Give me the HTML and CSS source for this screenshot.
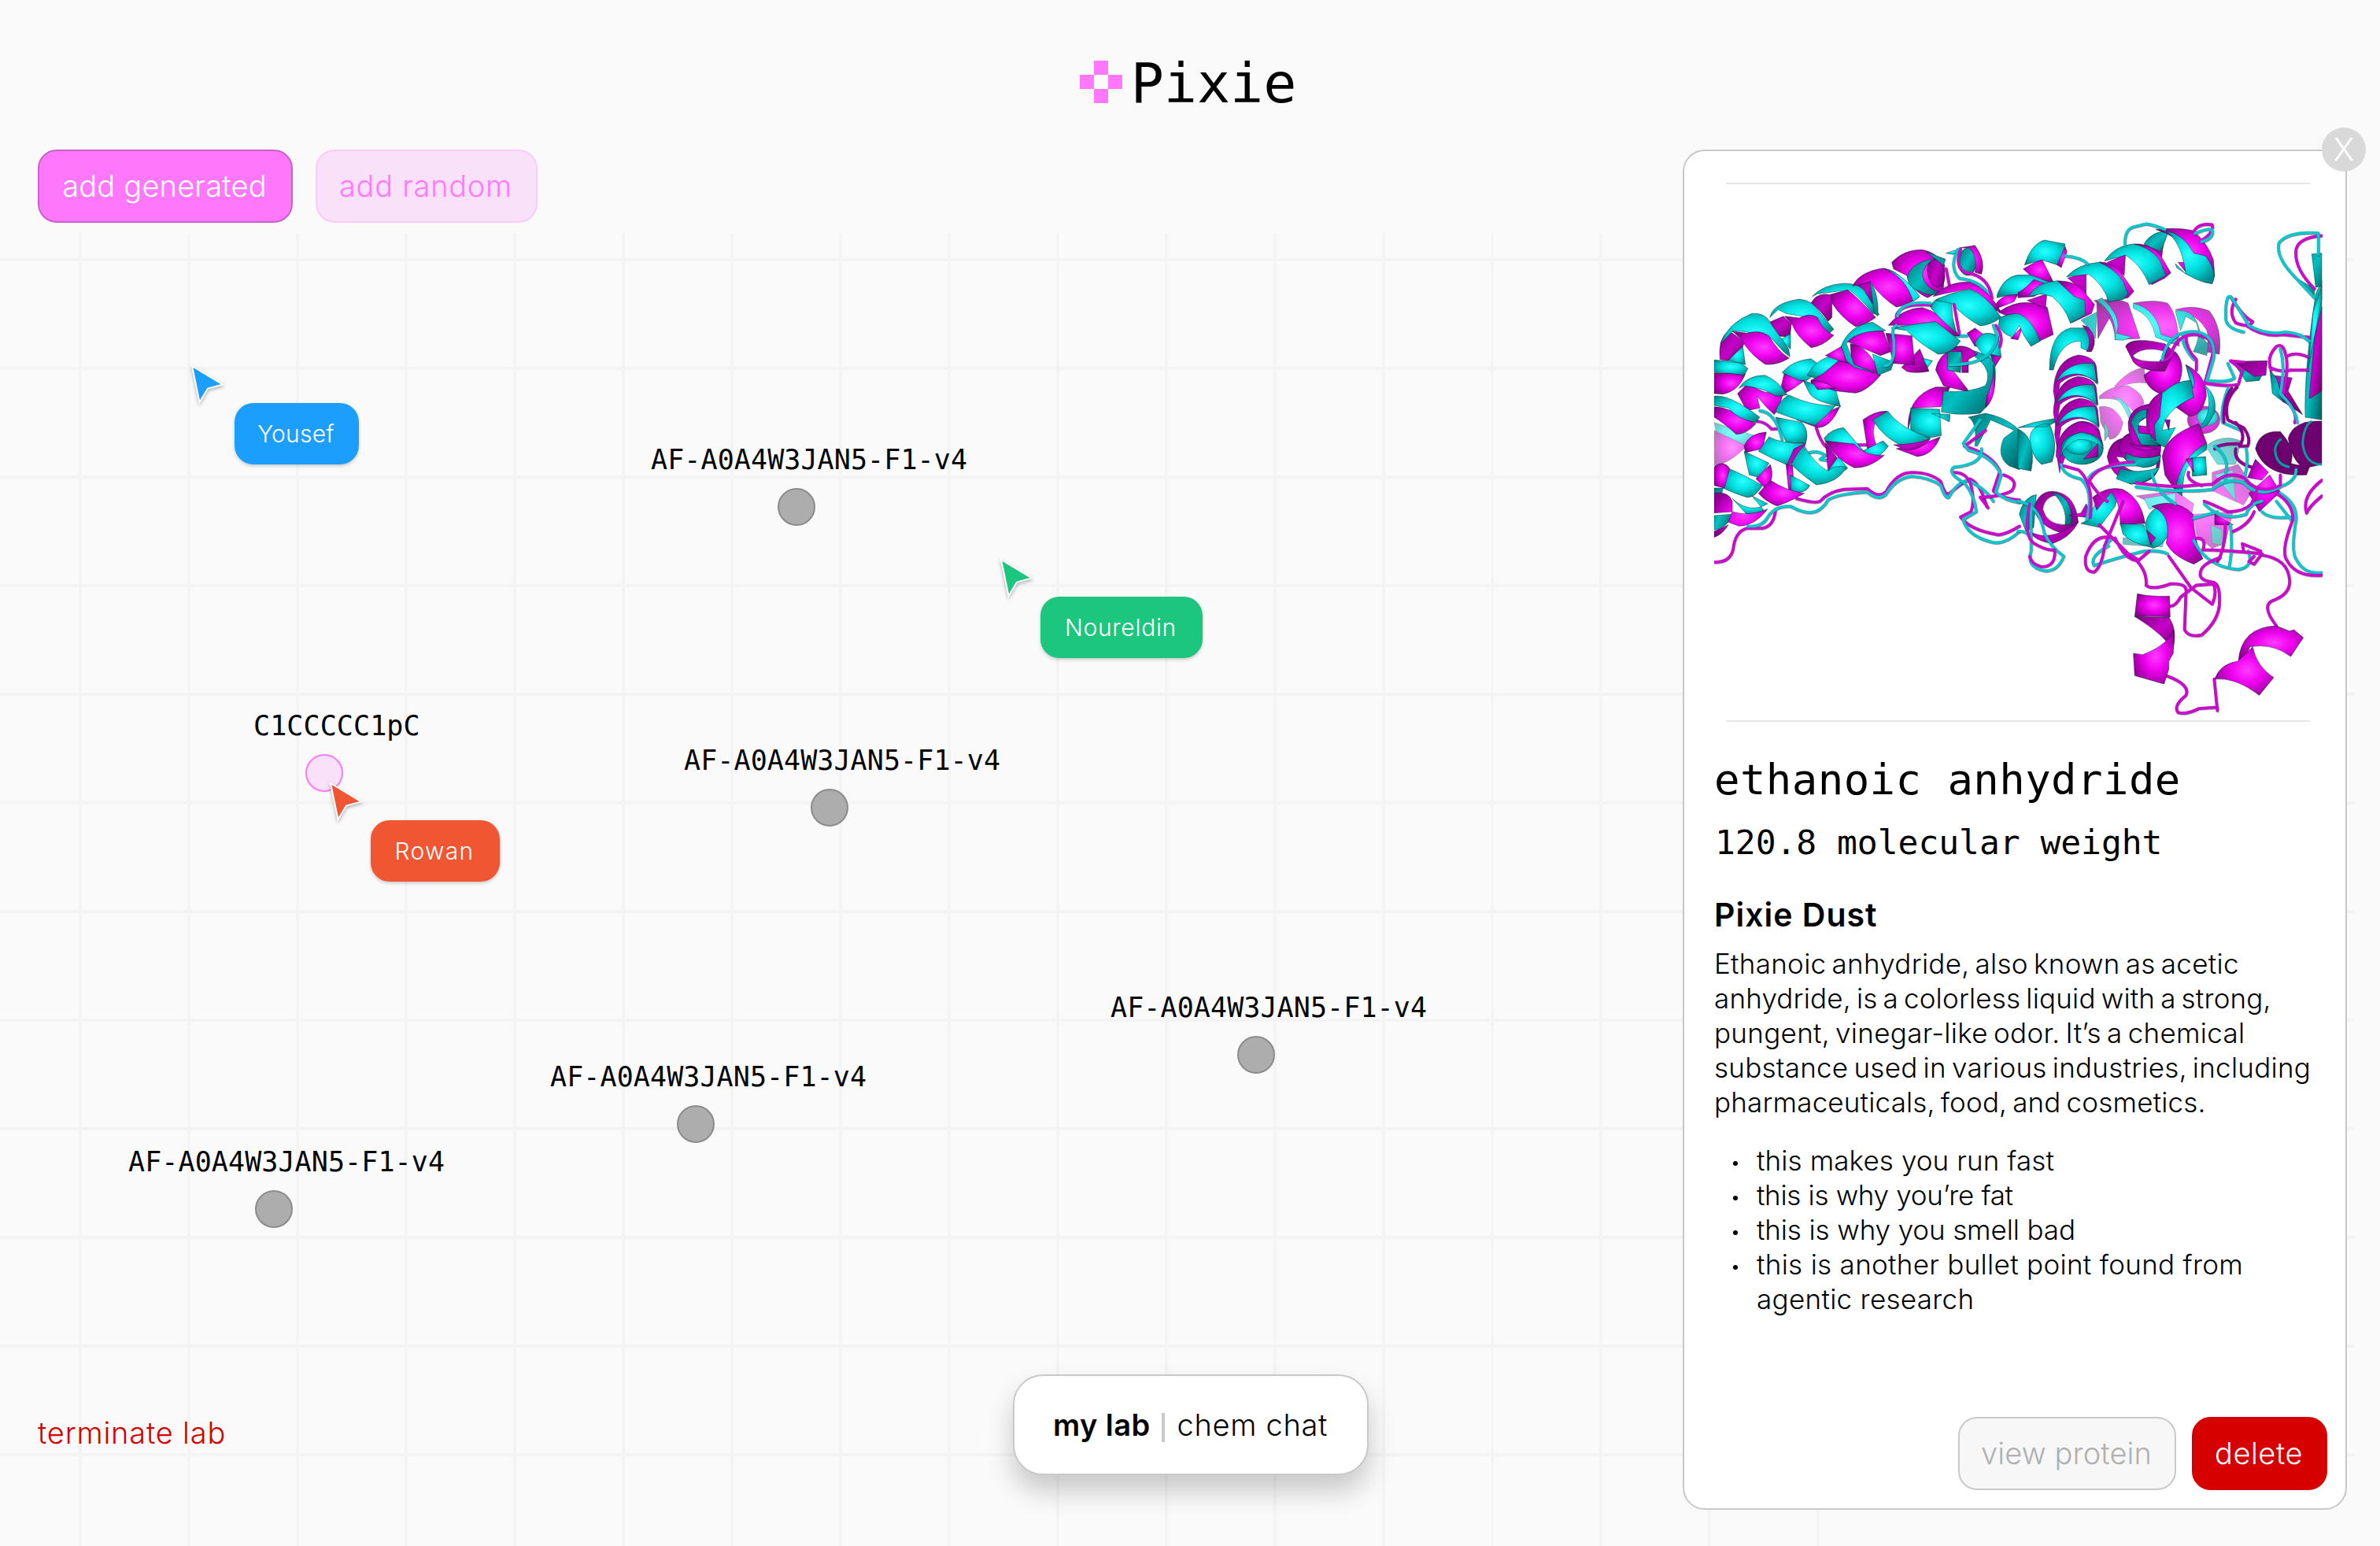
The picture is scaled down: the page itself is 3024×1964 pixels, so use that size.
FILE: index.html
```html
<!DOCTYPE html>
<html lang="en">
<head>
<meta charset="utf-8">
<title>Pixie</title>
<link rel="stylesheet" href="styles.css">
</head>
<body>
<div class="grid-lines"></div>

<header class="brand">
  <svg class="brand-mark" viewBox="0 0 3 3" shape-rendering="crispEdges"><path d="M1 0h1v1H1zM0 1h1v1H0zM2 1h1v1H2zM1 2h1v1H1z"/></svg>
  <h1 class="brand-name">Pixie</h1>
</header>

<main class="workspace">
  <div class="toolbar">
    <button class="btn btn-generated">add generated</button>
    <button class="btn btn-random">add random</button>
  </div>
  <div class="footer">
    <a class="terminate">terminate lab</a>
    <nav class="tabs">
      <span class="tab tab-active">my lab</span>
      <span class="tab-divider"></span>
      <span class="tab">chem chat</span>
    </nav>
  </div>
</main>

<aside class="panel">
  <button class="close" aria-label="close"><span>X</span></button>
  <figure class="figure">
    <svg class="protein" viewBox="2178 234 773 681">
      <defs>
        <radialGradient id="gm" cx=".55" cy=".48" r=".62"><stop offset="0" stop-color="#ff3cff"/><stop offset=".45" stop-color="#ee00ee"/><stop offset="1" stop-color="#8a008c"/></radialGradient>
        <radialGradient id="gc" cx=".5" cy=".45" r=".62"><stop offset="0" stop-color="#2dffff"/><stop offset=".45" stop-color="#00e2e2"/><stop offset="1" stop-color="#00888c"/></radialGradient>
        <linearGradient id="gmd" x1="0" y1="0" x2="1" y2="1"><stop offset="0" stop-color="#7c007e"/><stop offset=".5" stop-color="#c800ca"/><stop offset="1" stop-color="#6a006c"/></linearGradient>
        <linearGradient id="gcd" x1="0" y1="0" x2="1" y2="1"><stop offset="0" stop-color="#007476"/><stop offset=".5" stop-color="#00c0c2"/><stop offset="1" stop-color="#005e60"/></linearGradient>
      </defs>

      <!-- left half -->
      <g transform="translate(2176 270) scale(.33333)">
        <g class="tubes">
          <path class="tm" d="M6 1332Q65 1335 78 1285 85 1215 130 1203L190 1203Q235 1195 240 1130M320 1090Q390 1110 410 1100 440 1065 500 1055L590 1052Q630 1090 660 1065 700 990 760 990 830 990 870 1025 885 1075 900 1072 950 1030 980 1015 1020 1030 1045 1120M165 795Q200 795 225 825L275 822M395 820Q410 870 430 890M540 885H600M890 215L905 290"/>
          <path class="tc" d="M135 1195Q190 1200 210 1160 240 1115 300 1120 350 1150 390 1140 420 1130 440 1095 480 1070 590 1065 630 1100 660 1075 700 1010 760 1005 830 1010 870 1040 885 1090 900 1085 930 1030 970 1020 1040 1050 1070 1100M180 755Q240 760 265 865M370 915Q400 905 430 925L410 940 440 945M920 470H970"/>
        </g>
        <g class="far">
          <path class="c" d="M6 800L160 850 120 890 20 870Z"/><path class="m" d="M6 830L130 890Q60 960 6 965Z"/>
        </g>
        <!-- upper helix -->
        <path class="md" d="M28 560Q20 480 60 452 100 470 120 500L105 530 60 565Z"/><path class="c" d="M60 563L115 510 125 580Z"/>
        <path class="md" d="M212 420L270 395 300 425 295 475 245 470Z"/><path class="c" d="M260 485L297 460 297 520Z"/>
        <path class="md" d="M375 345Q400 300 455 315L455 400 440 415Q410 370 375 345Z"/>
        <path class="md" d="M530 290Q560 250 600 262 620 300 620 365 580 320 530 290Z"/>
        <path class="c" d="M30 500Q60 420 150 385 200 380 220 420L290 520 295 550 270 530 225 480 130 455 80 450Z"/>
        <path class="m" d="M75 452L130 460Q180 445 215 470 250 530 292 555 240 585 200 578 150 545 120 500 100 470 75 452Z"/>
        <path class="c" d="M218 400Q230 345 330 330 380 335 400 370L462 445 440 465Q400 400 340 395L280 385 250 370Z"/>
        <path class="m" d="M275 395L330 402Q370 380 400 400 420 450 462 468 420 510 375 515 320 470 305 430Z"/>
        <path class="c" d="M380 320Q420 275 500 270 560 270 580 300L635 390 610 385Q560 320 520 295L400 310Z"/>
        <path class="m" d="M450 312L515 295Q560 330 622 400 580 430 545 435 490 400 455 345Z"/>
        <path class="m" d="M533 280Q560 225 650 212 700 220 730 260L785 325Q740 355 700 360 650 330 600 265Z"/>
        <path class="m" d="M683 190Q730 140 800 142 850 150 885 200L880 290 820 325Q760 300 740 240L690 215Z"/>
        <path class="c" d="M815 150L888 178 880 202ZM655 213Q730 235 790 320L765 340Q740 250 655 213ZM600 262Q635 310 630 395L615 380Z"/>
        <path class="cd" d="M742 250Q750 190 850 175 800 200 800 240 810 290 868 305 830 325 790 300 750 290 742 250Z"/>
        <ellipse class="md" cx="852" cy="232" rx="32" ry="54" transform="rotate(-12 852 232)"/>
        <ellipse class="cd" cx="972" cy="188" rx="34" ry="52"/><path class="m" d="M940 135L1000 125Q1042 180 1025 235L1000 228Q1012 170 980 135Z"/><path class="c" d="M890 155L935 140 920 160Z"/>
        <g class="tubes"><path class="tc" d="M935 140Q900 210 940 250 1030 260 1060 325"/><path class="tm" d="M945 140Q920 215 970 230 1050 240 1065 325"/></g>
        <!-- ring and lower helix -->
        <path class="m" d="M970 460L1000 440 1080 500 1000 510Z"/><path class="c" d="M1000 500Q1020 440 1090 470L1100 550 1060 580Z"/><path class="md" d="M1060 540L1100 550 1075 590Z"/>
        <path class="m" d="M850 600Q860 540 930 510L970 520 900 580 980 685 880 660Z"/>
        <path class="m" d="M745 830Q740 700 850 665L905 665 870 740 765 745Z"/><path class="c" d="M755 745L865 750 872 850Q800 870 755 835ZM835 765L905 770 903 798Z"/>
        <path class="m" d="M700 900L830 870 868 855Q840 925 780 930Z"/>
        <path class="cd" d="M970 520Q1060 540 1076 580 1090 700 1020 765 940 775 872 760L880 680Q970 690 1040 660 1070 600 1000 550Z"/>
        <path class="m" d="M1070 580Q1090 700 1040 745L1045 700Q1075 640 1070 580Z"/>
        <path class="cd" d="M895 530L950 530 945 610 895 600Z"/><path class="md" d="M905 520Q960 490 1010 540L975 560 975 610 950 610 950 530Z"/>
        <path class="m" d="M573 790Q620 755 665 757L620 800Q600 850 640 920L590 900Z"/><path class="c" d="M570 910L650 870 670 890Q640 935 600 940Z"/>
        <path class="c" d="M610 790L668 757Q710 820 830 860 790 895 740 895 660 870 610 790Z"/><path class="md" d="M690 885Q770 885 830 862 800 905 740 905Z"/>
        <path class="md" d="M430 875L475 935 440 985Z"/><path class="c" d="M440 985L480 930 515 975 480 1000Z"/>
        <path class="c" d="M425 860Q450 825 500 820 540 870 600 935L560 920 430 872Z"/><path class="m" d="M430 870L475 875 540 882Q580 930 655 925 600 975 540 973 470 940 430 870Z"/>
        <path class="cd" d="M1000 890Q1010 800 975 780L1040 765Q1120 780 1170 830L1170 980 1130 965Q1080 930 1110 860L1150 830 1060 790 1010 890Z"/>
        <!-- middle helix -->
        <path class="md" d="M720 590L790 520 825 605Q770 615 740 605Z"/><path class="c" d="M800 555L838 565 820 590Z"/>
        <path class="m" d="M262 660L275 605 350 640Q300 680 270 690Z"/><path class="c" d="M265 610Q300 565 375 557L420 590 360 640 330 640Z"/>
        <path class="c" d="M360 620Q400 550 470 545L520 570 440 615 400 635Z"/><path class="m" d="M430 545L500 505 520 578Z"/>
        <path class="m" d="M375 640L420 615 480 565Q560 580 640 620 590 680 545 688 470 680 375 670Z"/>
        <path class="m" d="M510 490Q560 430 650 450L680 530 640 545Q580 520 510 490Z"/><path class="m" d="M525 500Q600 510 640 620L600 600 530 580Z"/>
        <path class="c" d="M490 510Q520 430 610 418L660 450Q540 450 510 500L540 580 615 610 540 590 510 565ZM610 540L690 570 680 600 630 620Z"/>
        <path class="m" d="M660 460L760 470 770 580 690 575Z"/>
        <path class="m" d="M670 430Q720 365 800 362 870 380 942 470L900 470 850 420 740 430Z"/><path class="c" d="M680 440Q740 430 850 415L945 490Q910 540 860 540 790 500 740 450Z"/>
        <path class="c" d="M830 360Q850 310 910 330L915 400 930 460Q850 390 830 360Z"/>
        <path class="m" d="M840 320Q900 260 980 265 1050 290 1100 380L1070 370 980 290 880 310Z"/><path class="c" d="M850 335Q890 310 980 292 1040 310 1100 400 1060 430 1020 432 960 400 910 345Z"/>
        <!-- lower-left bundle -->
        <path class="c" d="M345 640Q420 665 470 680L488 740 470 735Q390 720 370 690Z"/><path class="m" d="M375 640Q420 640 470 670L400 675Z"/>
        <path class="m" d="M95 690L130 655 200 685 270 690Q250 750 235 770 200 740 170 700L180 745 130 755Z"/><path class="c" d="M100 670Q130 620 200 620 250 640 285 695L240 700Q200 670 120 660Z"/>
        <path class="m" d="M6 612Q60 612 125 615 100 680 40 692L6 690Z"/><path class="c" d="M6 562Q60 565 110 575L135 595 120 620Q60 610 6 610Z"/>
        <path class="m" d="M6 740Q60 740 165 805 130 845 90 845 40 800 6 780Z"/><path class="c" d="M6 700Q60 690 180 780L165 800Q100 790 60 745L6 735Z"/>
        <path class="c" d="M240 780L340 800Q370 830 355 880L280 875Z"/>
        <path class="m" d="M485 740Q450 820 400 820L320 790 400 775Z"/><path class="c" d="M290 695Q380 740 470 735 430 780 390 812 320 790 240 760 250 720 290 695Z"/>
        <path class="c" d="M120 910L215 955 180 1010 140 1000Z"/><path class="m" d="M165 1015L220 960Q240 1020 200 1050Z"/>
        <path class="m" d="M120 890Q140 840 205 837L190 900 125 915Z"/><path class="c" d="M175 910L215 855Q260 880 350 880 320 960 280 960 230 940 175 910Z"/><path class="md" d="M355 880Q330 960 285 958L310 900Z"/>
        <path class="m" d="M280 960L305 960 310 1060 290 1060Z"/><path class="c" d="M295 1000L370 1040Q360 1070 300 1070Z"/>
        <path class="c" d="M300 960Q330 900 350 890 390 960 440 985 470 960 510 970 480 1030 395 1038 340 1000 300 960Z"/>
        <path class="c" d="M75 1090Q140 1150 210 1110L150 1080 200 1140 130 1150Z"/>
        <path class="m" d="M175 1070L220 1020Q280 1060 350 1070 280 1110 245 1118 200 1100 175 1070Z"/>
        <path class="c" d="M60 975Q120 1000 190 1040 160 1090 130 1085 80 1070 40 1050Z"/><path class="m" d="M6 970Q40 940 65 975L45 1050 6 1040Z"/>
        <path class="cd" d="M6 1050L40 1050 30 1090 6 1090ZM6 1155L75 1150Q60 1200 6 1210Z"/><path class="m" d="M6 1070Q60 1060 75 1100L75 1140 6 1145ZM75 1140Q140 1160 210 1130 160 1195 100 1195L60 1180ZM6 1215L60 1190Q40 1225 6 1238Z"/>
        <g class="tubes">
          <path class="tm" d="M700 395Q710 345 830 352M1040 830L960 890Q1065 920 1095 985L1070 1060Q1100 1090 1170 1095M920 990Q970 990 985 1040 1000 1100 985 1140L945 1160Q980 1210 1090 1228 1120 1225 1170 1195M1110 1000Q1170 1020 1140 1060 1110 1080 1020 1085L1050 1125M920 350L940 460M1080 430Q1110 470 1095 510"/>
          <path class="tc" d="M655 585Q700 580 690 480 680 440 700 430M705 395Q715 335 830 345M1020 790L955 880 975 905Q1070 930 1100 1000L1080 1065Q1110 1095 1170 1105M1025 900Q1030 960 920 970 890 990 960 1030 1000 1080 1005 1140L955 1170Q970 1230 1060 1255 1110 1270 1170 1215M905 580Q1070 580 1085 470L1070 430"/>
        </g>
      </g>

      <!-- right half -->
      <g transform="translate(2564 270) scale(.33333)">
        <g class="far">
          <path class="m" d="M370 660Q420 600 480 590L490 650Q420 640 370 680ZM310 700Q350 660 420 660 480 690 480 730L440 760Q400 700 310 710ZM310 740Q370 730 400 800 390 860 350 865L315 800Z"/>
          <path class="m" d="M740 990L840 960 900 1050 860 1115 740 1060ZM450 1080L600 1060 670 1110 660 1160 600 1150ZM670 1150L820 1140 790 1260 740 1280 680 1230Z"/>
          <path class="c" d="M715 890Q780 840 850 870L830 960 760 960ZM750 1000L820 980 830 1100ZM480 1090L600 1070 600 1110 500 1130ZM735 1190L780 1210 780 1270 740 1260ZM400 1240L560 1240 550 1275 400 1265Z"/>
          <path class="c" d="M360 700Q420 710 440 790L425 790Q400 720 360 700ZM330 800Q360 840 330 870Z"/>
        </g>
        <g class="mid">
          <path class="m" d="M290 335Q380 325 420 345L465 480 370 485Q370 400 290 335ZM440 345Q520 330 570 345 610 390 615 510L530 475Q510 390 440 345ZM600 370Q670 350 730 375 780 440 768 540L680 525Q740 520 720 450 690 390 600 370ZM300 345Q350 360 350 400L305 480Z"/>
          <path class="c" d="M320 325Q400 400 375 460L435 475 400 487 370 485Q380 390 300 335ZM440 345Q530 370 545 465L612 485 590 500 525 475Q510 390 440 365ZM600 375Q670 365 690 440 700 480 725 500L720 545 668 530Q700 470 680 420L640 395 620 450ZM240 410L300 380 295 480 265 435Z"/>
          <ellipse class="m" cx="708" cy="790" rx="62" ry="52"/><ellipse class="c" cx="722" cy="780" rx="40" ry="32"/>
        </g>
        <!-- top helix -->
        <path class="m" d="M20 215L90 175 135 265 70 260Z"/><path class="c" d="M25 200Q50 120 100 105L180 120 165 205 90 180Z"/><path class="m" d="M180 130L187 150 165 210 150 200Z"/>
        <path class="m" d="M-82 345Q-50 305 0 312L-15 340 -80 365Z"/>
        <path class="c" d="M-80 315Q-55 245 0 238L50 238 130 270 100 310 0 312Q-40 312 -80 325Z"/><path class="m" d="M0 305Q30 290 60 255L130 280 60 320 0 325Z"/>
        <path class="m" d="M-75 380Q-20 342 30 343 90 345 112 362L135 465 60 500 0 410Z"/><path class="m" d="M-28 480L20 430 0 485Z"/>
        <path class="c" d="M-70 400Q-30 385 0 385 50 400 85 490L50 510Q20 470 5 430L-20 475Q-60 465 -74 430Z"/>
        <path class="md" d="M340 190L410 160 405 240ZM190 250L260 230 260 310ZM35 335L110 310 105 365ZM480 125L560 75 548 170Z"/>
        <path class="m" d="M150 260Q220 260 250 300L292 350 280 385 205 420 230 340Z"/><path class="c" d="M40 320Q70 265 150 260L215 320 255 335 258 390 200 422Q180 360 130 320L90 310Z"/>
        <path class="m" d="M310 188Q370 190 400 240L442 300 420 325 345 340Z"/><path class="c" d="M185 245Q230 195 310 190 370 215 400 260L420 310 400 332 345 340Q330 280 270 235Z"/>
        <path class="m" d="M440 120Q500 115 545 165L583 230 560 250 510 275Z"/><path class="c" d="M330 185Q370 125 440 120 500 130 540 180L565 240 500 275Q470 200 410 162Z"/>
        <path class="cd" d="M480 120Q510 70 575 70L545 150Z"/>
        <path class="m" d="M525 65Q600 55 665 68 720 110 745 180L750 245 700 200 640 170Q620 90 525 65ZM610 190L640 190 650 240Z"/><path class="c" d="M560 68Q630 80 670 155L715 165Q765 230 740 272 680 265 605 210L600 195 640 235Q625 110 560 68Z"/>
        <!-- vertical helix -->
        <path class="c" d="M120 600Q120 460 200 440L270 440Q295 480 270 530L240 515 240 490Q160 490 135 600Z"/><path class="md" d="M265 435Q310 480 280 530L262 530Q290 480 245 430Z"/>
        <g id="turn"><path class="md" d="M135 680Q140 560 230 543 300 550 300 600L305 650Q230 590 160 650L145 740Z"/><path class="c" d="M145 645Q190 565 290 575L303 655Q230 580 145 645Z"/></g>
        <use href="#turn" y="82"/><use href="#turn" x="5" y="165"/><use href="#turn" x="14" y="252"/>
        <path class="md" d="M145 930Q145 830 230 797 310 800 325 890L300 860Q200 850 170 960Z"/>
        <ellipse class="cd" cx="245" cy="900" rx="80" ry="60"/><ellipse class="c" cx="232" cy="888" rx="50" ry="34"/><path class="c" d="M160 940Q170 850 240 838 310 845 325 900 280 860 230 865 180 880 160 940Z"/><path class="md" d="M250 940L305 880 305 930Z"/>
        <path class="cd" d="M0 825Q60 850 55 950L50 985 0 975Z"/><path class="c" d="M45 860Q50 805 120 805 155 880 130 950L90 960Q50 930 45 860ZM0 820L60 800 140 785 140 800 110 815Z"/>
        <!-- central cluster -->
        <path class="m" d="M640 580Q720 620 718 700 700 780 650 775L600 740 660 650Z"/><path class="c" d="M715 660Q760 700 750 760 720 830 690 820 750 760 715 660ZM640 580Q680 620 670 670L655 640Z"/>
        <path class="m" d="M480 620L600 530Q645 580 610 660L540 690Q490 670 480 620Z"/>
        <path class="md" fill-rule="evenodd" d="M410 510Q430 470 560 500L595 530 560 605Q470 605 440 570ZM438 545Q450 570 540 568L565 530Q480 505 438 545Z"/>
        <path class="md" fill-rule="evenodd" d="M340 930Q350 870 400 860L540 900Q560 1035 430 1035 350 1000 340 930ZM375 930Q390 970 450 990L525 985 530 950Z"/><path class="cd" d="M390 975Q460 1000 540 970 510 1035 430 1035L375 1015Z"/>
        <path class="md" fill-rule="evenodd" d="M385 900Q390 850 430 840L545 890Q545 970 480 970 400 960 385 900ZM425 880Q460 920 530 900Z"/><path class="cd" d="M410 915Q470 950 545 925 540 970 480 972 430 965 410 940Z"/>
        <path class="md" fill-rule="evenodd" d="M420 800Q430 740 500 730L550 830 545 890 450 890Q420 860 420 800ZM445 810L490 780 490 815Z"/><path class="cd" d="M430 800Q450 750 490 750L490 780Q450 790 460 840L540 850 535 890 470 885Z"/>
        <path class="c" d="M550 690Q600 640 660 640L670 705Q560 750 550 830L600 820 560 895 510 870Q480 760 550 690Z"/><path class="md" d="M490 780Q490 710 550 685L540 780 520 810 525 870Q495 850 490 780ZM560 790L580 790 575 830Z"/>
        <path class="m" d="M550 930Q560 850 690 805L720 880Q620 930 600 1060L560 1000Z"/><path class="c" d="M600 1060Q620 930 720 880L718 905Q640 950 632 1010L625 1080Z"/>
        <path class="c" d="M660 935L715 930 720 1000 665 1005Z"/><path class="m" d="M640 940L665 935 670 990Z"/>
        <!-- right edge -->
        <path class="cd" d="M820 570L950 580 920 640 870 645Z"/><path class="md" d="M820 568L950 565 945 620 900 625ZM970 620L1045 630 1030 680 1085 770 1010 720Z"/><path class="cd" d="M960 600L985 630 1015 725 970 690Z"/>
        <path class="cd" d="M1135 310L1158 260 1158 790 1095 780Q1090 600 1135 310Z"/><path class="c" d="M1125 380L1158 280 1158 330 1125 500 1105 600Z"/><path class="md" d="M1130 480L1158 360 1158 680 1110 710Z"/><path class="cd" d="M1120 158L1158 155 1158 280 1135 285ZM1045 240L1130 290 1130 330Z"/>
        <path class="m" d="M875 1010L905 940 955 990 930 1020ZM880 1070L960 1000 1000 1065 920 1140Z"/>
        <path class="dk" d="M905 900Q920 830 1000 835 1060 900 1040 960L1000 975Q960 960 985 870 1000 980 1115 960L1100 1000Q940 1010 905 900Z"/><path class="dk" d="M1030 860Q1050 790 1158 795L1158 960 1090 975Q1040 940 1030 860Z"/>
        <path class="ln" d="M1158 960Q1095 960 1085 880 1090 810 1120 795M1035 970Q980 960 980 900 990 865 1005 865"/>
        <!-- lower row -->
        <path class="cd" d="M5 1150Q20 1085 70 1075L60 1200 30 1215Z"/><path class="md" fill-rule="evenodd" d="M60 1130Q80 1050 150 1065 220 1080 230 1180L180 1225Q80 1200 60 1130ZM95 1130Q110 1190 180 1190 200 1120 160 1075 100 1080 95 1130Z"/><path class="cd" d="M130 1065Q210 1080 205 1190L180 1190Q190 1120 130 1065Z"/>
        <path class="md" d="M45 1215Q120 1260 230 1180 200 1240 130 1262 60 1250 45 1215ZM195 1155L240 1145 260 1110 290 1165Z"/>
        <path class="c" d="M270 1170Q290 1090 350 1065L385 1070 370 1120 310 1200 240 1185Z"/><path class="m" d="M285 1085Q340 1040 400 1055 470 1090 485 1185L390 1190Q390 1100 355 1065L300 1135Z"/>
        <path class="c" d="M390 1185L480 1190 515 1278Q430 1260 400 1225Z"/><path class="c" d="M485 1190Q500 1110 590 1115 600 1250 515 1280Z"/><path class="m" d="M490 1210L525 1240 505 1265ZM510 1120Q600 1085 668 1150 670 1250 705 1320L670 1340Q590 1310 565 1260 590 1150 510 1120Z"/>
        <path class="m" d="M750 1150L820 1190 750 1190Z"/>
        <g class="tubes">
          <path class="tm" d="M670 72Q690 38 740 46 748 78 700 105M1130 290Q1050 210 1060 140 1070 95 1158 88M810 320Q860 400 895 415 880 440 830 420 800 380 830 330M870 430Q930 475 1010 465L1110 475M1030 545Q1060 530 1105 550M1040 600H1105"/>
          <path class="tc" d="M408 125Q405 65 440 55L490 43Q530 50 560 65M675 80Q740 50 742 75 740 100 700 112M180 165Q240 170 265 195M1130 325L1060 250Q980 170 995 115 1030 70 1145 78V160M860 455Q790 440 792 400 790 300 815 325L880 430Q950 470 1020 455 1080 460 1110 490M630 470Q620 500 670 560"/>
          <path class="tm" d="M545 565Q590 560 590 520 620 460 680 465 760 480 742 540L712 650Q800 665 840 655L855 600 810 565 860 570M640 470Q640 520 680 560V600M965 600Q945 550 985 510 1010 495 1020 540 1035 590 1008 700 1070 760 1055 800M960 590Q1000 610 1040 600"/>
          <path class="tc" d="M550 560Q560 500 610 465 680 440 720 470 755 500 745 560L720 640Q800 650 825 630L800 575M1000 520Q1020 590 1000 690 1060 750 1065 800M800 670Q770 750 780 800L850 830"/>
          <path class="td" d="M835 665Q780 720 800 790L860 820Q890 860 875 890L845 890M750 900Q760 880 850 880 870 840 830 800M830 900Q820 950 890 970M815 670Q780 710 785 800"/>
          <path class="tc" d="M750 890Q790 920 795 960L790 1020M870 900Q880 960 860 1020M270 1010Q300 960 450 960M165 960Q170 1000 240 1015 290 1060 262 1170M450 1045Q620 1070 740 1055 800 1005 860 1030 920 1095 1010 1040M510 990Q520 1060 600 1110M670 1165L760 1140M710 1110Q780 1180 870 1150 880 1110 930 1100M1040 1160Q960 1170 930 1140M985 1100L1040 1170M810 1190Q820 1280 805 1350M1010 1040Q1060 1020 1060 980"/>
          <path class="tm" d="M175 965L230 980Q290 1030 275 1160M270 1030Q290 960 440 950M450 1030Q600 1050 660 1040L740 1035Q800 980 860 1010 920 1080 1000 1040V1000M710 1100Q740 1110 800 1140 860 1140 890 1110L910 1060M820 1215Q880 1190 900 1140M650 990Q640 1020 700 1040M270 1020Q300 1070 340 1100M1158 1020Q1080 1080 1100 1145 1110 1120 1158 1080"/>
          <path class="tc" d="M0 1100Q80 1110 100 1220 120 1270 175 1310 150 1370 100 1365 30 1350 50 1290V1110M345 1270Q270 1310 290 1345 360 1320 480 1290 540 1285 570 1300M330 1270L360 1240M670 1250Q720 1350 840 1360 900 1350 878 1290M0 1215Q30 1210 50 1240"/>
          <path class="tm" d="M45 1110Q20 1230 60 1260 110 1290 140 1285 145 1350 90 1350 50 1340 45 1310M360 1240Q290 1220 258 1310 250 1370 290 1370 320 1350 330 1270L400 1100M370 1240Q410 1330 460 1325L500 1290M310 1190L420 1300 460 1325M680 1240Q720 1240 705 1285 780 1285 930 1300L900 1340 880 1330 900 1310M860 1290L855 1262 925 1290M790 1190Q790 1280 760 1330"/>
        </g>
      </g>

      <!-- lower strand -->
      <g transform="translate(2564 640) scale(.33333)">
        <g class="tubes">
          <path class="tc" d="M1000 -40Q1065 0 1060 60 1040 180 1060 210 1090 270 1158 262"/>
          <path class="tm" d="M985 -40Q1050 0 1048 60 1000 180 1025 215 1060 280 1158 272M430 195Q495 250 488 310 510 330 580 305 650 300 640 340L635 480Q650 510 700 500 770 440 768 370 770 300 740 298 690 290 695 265 695 230 770 205M575 200L660 320 740 382Q760 340 745 305L680 310 620 355Q600 390 580 390M930 195Q1030 210 1035 290 1040 340 980 365 920 380 985 465"/>
          <path class="tm" d="M565 655Q660 690 640 730 590 770 610 795 640 805 690 780L760 775V788L748 668"/>
        </g>
        <path class="md" d="M445 430L575 432Q610 480 590 560 560 500 445 430Z"/><path class="m" d="M455 343Q510 355 578 352L580 432Q510 425 445 430Z"/>
        <path class="m" d="M440 570L475 575Q570 540 594 480L592 570 575 600 575 630 557 687 445 655Z"/>
        <path class="m" d="M840 600Q850 470 985 465L1035 485 1052 480 1088 510 1040 582Q970 530 885 545 870 580 840 600Z"/><path class="m" d="M838 600L895 545Q910 620 975 662L920 730Q830 660 750 668 770 610 838 600Z"/>
      </g>
    </svg>
  </figure>

  <section class="details">
    <h2 class="compound">ethanoic anhydride</h2>
    <p class="weight">120.8 molecular weight</p>
    <h3 class="heading">Pixie Dust</h3>
    <p class="text">
      <span>Ethanoic anhydride, also known as acetic</span>
      <span>anhydride, is a colorless liquid with a strong,</span>
      <span>pungent, vinegar-like odor. It’s a chemical</span>
      <span>substance used in various industries, including</span>
      <span>pharmaceuticals, food, and cosmetics.</span>
    </p>
    <ul class="facts">
      <li>this makes you run fast</li>
      <li>this is why you’re fat</li>
      <li>this is why you smell bad</li>
      <li>this is another bullet point found from<br>agentic research</li>
    </ul>
  </section>

  <div class="actions">
    <button class="btn btn-view">view protein</button>
    <button class="btn btn-delete">delete</button>
  </div>
</aside>

<div class="board">
  <div class="node n1"><span>AF-A0A4W3JAN5-F1-v4</span><i></i></div>
  <div class="node n2"><span>AF-A0A4W3JAN5-F1-v4</span><i></i></div>
  <div class="node n3"><span>AF-A0A4W3JAN5-F1-v4</span><i></i></div>
  <div class="node n4"><span>AF-A0A4W3JAN5-F1-v4</span><i></i></div>
  <div class="node n5"><span>AF-A0A4W3JAN5-F1-v4</span><i></i></div>
  <div class="node node-own"><span>C1CCCCC1pC</span><i></i></div>

  <div class="cursor cursor-blue"><svg viewBox="-3 -3 50 60"><path d="M1 1L40 24.500 21 29.500 10.500 47Z"/></svg><b>Yousef</b></div>
  <div class="cursor cursor-green"><svg viewBox="-3 -3 50 60"><path d="M1 1L40 24.500 21 29.500 10.500 47Z"/></svg><b>Noureldin</b></div>
  <div class="cursor cursor-orange"><svg viewBox="-3 -3 50 60"><path d="M1 1L40 24.500 21 29.500 10.500 47Z"/></svg><b>Rowan</b></div>
</div>
</body>
</html>
```
FILE: styles.css
```css
* { box-sizing: border-box; margin: 0; padding: 0; }

body {
  position: relative;
  width: 3024px;
  height: 1964px;
  overflow: hidden;
  display: grid;
  grid-template-columns: 1fr 844px;
  grid-template-rows: 190px 1728px;
  padding-right: 42px;
  background: #fafafa;
  color: #000;
  font-family: Inter, "Liberation Sans", sans-serif;
  font-weight: 300;
  font-size: 38px;
}

button { font: inherit; border: 0; background: none; }

/* background lines, one every 138px */
.grid-lines {
  position: absolute;
  left: 0;
  top: 296px;
  width: 2992px;
  height: 1668px;
  background:
    repeating-linear-gradient(to right, #f4f4f4 0 4px, transparent 4px 138px) 100px 0 / 2212px 100% no-repeat,
    repeating-linear-gradient(to bottom, #f4f4f4 0 4px, transparent 4px 138px) 0 32px / 100% 1636px no-repeat;
}

.brand {
  grid-column: 1 / -1;
  display: flex;
  align-items: center;
  justify-content: center;
  gap: 11px;
  padding: 18px 0 0 37px;
}
.brand-mark { width: 54px; height: 54px; fill: #ff78fb; }
.brand-name {
  padding-top: 3px;
  font: 400 70px/1 "DejaVu Sans Mono", monospace;
}

.workspace {
  position: relative;
  display: flex;
  flex-direction: column;
  justify-content: space-between;
  padding: 0 0 44px 48px;
}
.toolbar { display: flex; gap: 29px; }

.btn {
  display: flex;
  align-items: center;
  justify-content: center;
  height: 93px;
  padding: 0 2px 2px 0;
  border: 2px solid;
  border-radius: 24px;
  white-space: nowrap;
}
.btn-generated { width: 324px; background: #ff78fb; border-color: #ca60c7; color: #fff; letter-spacing: .19px; }
.btn-random { width: 282px; background: #fae1fa; border-color: #fdcaf9; color: #ff78fb; letter-spacing: .72px; }

.footer { display: grid; grid-template-columns: 1239px 452px; align-items: center; }
.terminate { padding-top: 20px; color: #d40000; letter-spacing: .8px; }
.tabs {
  display: flex;
  align-items: center;
  height: 128px;
  padding-left: 49px;
  border: 2px solid #c9c9c9;
  border-radius: 38px;
  background: #fff;
  box-shadow: 0 20px 34px rgba(0, 0, 0, .2);
}
.tab { letter-spacing: .7px; }
.tab-active { font-weight: 600; letter-spacing: .42px; }
.tab-divider { width: 4px; height: 37px; margin: 7px 16px 0 14px; background: #c9c9c9; }

.panel {
  position: relative;
  display: flex;
  flex-direction: column;
  border: 2px solid #c8c8c8;
  border-radius: 28px;
  background: #fff;
}
.close {
  position: absolute;
  top: -30px;
  right: -26px;
  width: 56px;
  height: 56px;
  display: grid;
  place-items: center;
  border-radius: 50%;
  background: #d9d9d9;
  color: #fff;
  font-size: 40px;
  line-height: 1;
}

.figure { margin: 40px 0 0; display: flex; flex-direction: column; align-items: center; padding-left: 8px; }
.figure::before, .figure::after { content: ""; width: 742px; height: 2px; background: #e6e6e8; }
.protein { width: 773px; height: 681px; display: block; }
.protein path, .protein ellipse { stroke: rgba(0, 30, 40, .55); stroke-width: 2.5; stroke-linejoin: round; }
.protein .m { fill: url(#gm); }
.protein .c { fill: url(#gc); }
.protein .md { fill: url(#gmd); }
.protein .cd { fill: url(#gcd); }
.protein .dk { fill: #70006f; }
.protein .ln { fill: none; stroke: #00a0a2; stroke-width: 9; }
.protein .far { opacity: .55; }
.protein .mid { opacity: .78; }
.protein .tubes { filter: drop-shadow(1px 2px 1px rgba(40, 0, 50, .6)); }
.protein .tubes path { fill: none; stroke-width: 11; stroke-linecap: round; }
.protein .tubes .tm { stroke: #cc0acb; }
.protein .tubes .tc { stroke: #0cc6c9; }
.protein .tubes .td { stroke: #8c008e; }

.details { padding: 0 0 0 39px; }
.compound {
  margin: 38px 0 0 -1px;
  font: 400 54px/72px "DejaVu Sans Mono", monospace;
  letter-spacing: .42px;
}
.weight {
  margin-top: 7px;
  font: 400 43px/72px "DejaVu Sans Mono", monospace;
  letter-spacing: -.05px;
}
.heading { margin: 26px 0 0 -1px; font-size: 41px; font-weight: 600; line-height: 60px; letter-spacing: 1px; }
.text { margin: 10px 0 0 -1px; font-size: 35px; line-height: 44px; word-spacing: -3px; }
.text span { display: block; white-space: nowrap; }
.text span:nth-child(1) { letter-spacing: .28px; }
.text span:nth-child(2) { letter-spacing: .18px; }
.text span:nth-child(3) { letter-spacing: .3px; }
.text span:nth-child(4) { letter-spacing: .25px; }
.text span:nth-child(5) { letter-spacing: .17px; }
.facts { margin-top: 30px; list-style: none; font-size: 35px; line-height: 44px; letter-spacing: .1px; }
.facts li { display: grid; grid-template-columns: 53px 1fr; align-items: start; }
.facts li::before { content: ""; width: 6px; height: 6px; margin: 23px 0 0 23px; border-radius: 50%; background: #000; }
.facts li:nth-child(2) { letter-spacing: -.32px; }
.facts li:nth-child(3) { letter-spacing: -.12px; }
.facts li:nth-child(4) { letter-spacing: .3px; }

.actions { display: flex; justify-content: flex-end; gap: 20px; margin: auto 23px 23px 0; }
.btn-view { width: 277px; background: #f7f7f7; border-color: #c9c9c9; color: #b0b0b0; letter-spacing: .11px; }
.btn-delete { width: 172px; background: #d60000; border-color: #d60000; color: #fff; letter-spacing: .53px; }

/* free canvas: nodes and live cursors */
.board { position: absolute; left: 0; top: 0; width: 0; height: 0; }
.node { position: absolute; width: 402px; height: 100px; }
.node span {
  display: block;
  font: 400 35px/40px "DejaVu Sans Mono", monospace;
  letter-spacing: .09px;
  white-space: nowrap;
}
.node i {
  display: block;
  width: 48px;
  height: 48px;
  margin: 16px 0 0 161px;
  border: 2px solid #8b8b8b;
  border-radius: 50%;
  background: #adadad;
}
.n1 { left: 827px; top: 564px; }
.n2 { left: 869px; top: 946px; }
.n3 { left: 1411px; top: 1260px; }
.n4 { left: 699px; top: 1348px; }
.n5 { left: 163px; top: 1456px; }
.node-own { left: 322px; top: 902px; }
.node-own i { margin-left: 66px; border-color: #ff78fb; background: #fae1fa; }

.cursor { position: absolute; display: flex; align-items: flex-start; }
.cursor svg {
  width: 50px;
  height: 60px;
  margin: -3px 5px 0 -3px;
  stroke: #fff;
  stroke-width: 2;
  filter: drop-shadow(0 2px 2px rgba(0, 0, 0, .3));
}
.cursor b {
  display: grid;
  place-items: center;
  height: 78px;
  margin-top: 48px;
  padding-right: 2px;
  border-radius: 24px;
  color: #fff;
  font-weight: 300;
  font-size: 30px;
  box-shadow: 0 2px 4px rgba(0, 0, 0, .2);
}
.cursor-blue { left: 243px; top: 464px; fill: #1c9ffc; }
.cursor-blue b { width: 158px; margin-left: 3px; background: #1c9ffc; letter-spacing: .2px; }
.cursor-green { left: 1271px; top: 710px; fill: #1dc67f; }
.cursor-green b { width: 206px; margin-left: -1px; background: #1dc67f; letter-spacing: .7px; }
.cursor-orange { left: 419px; top: 994px; fill: #f15633; }
.cursor-orange b { width: 164px; background: #f15633; letter-spacing: 1.3px; }
```
